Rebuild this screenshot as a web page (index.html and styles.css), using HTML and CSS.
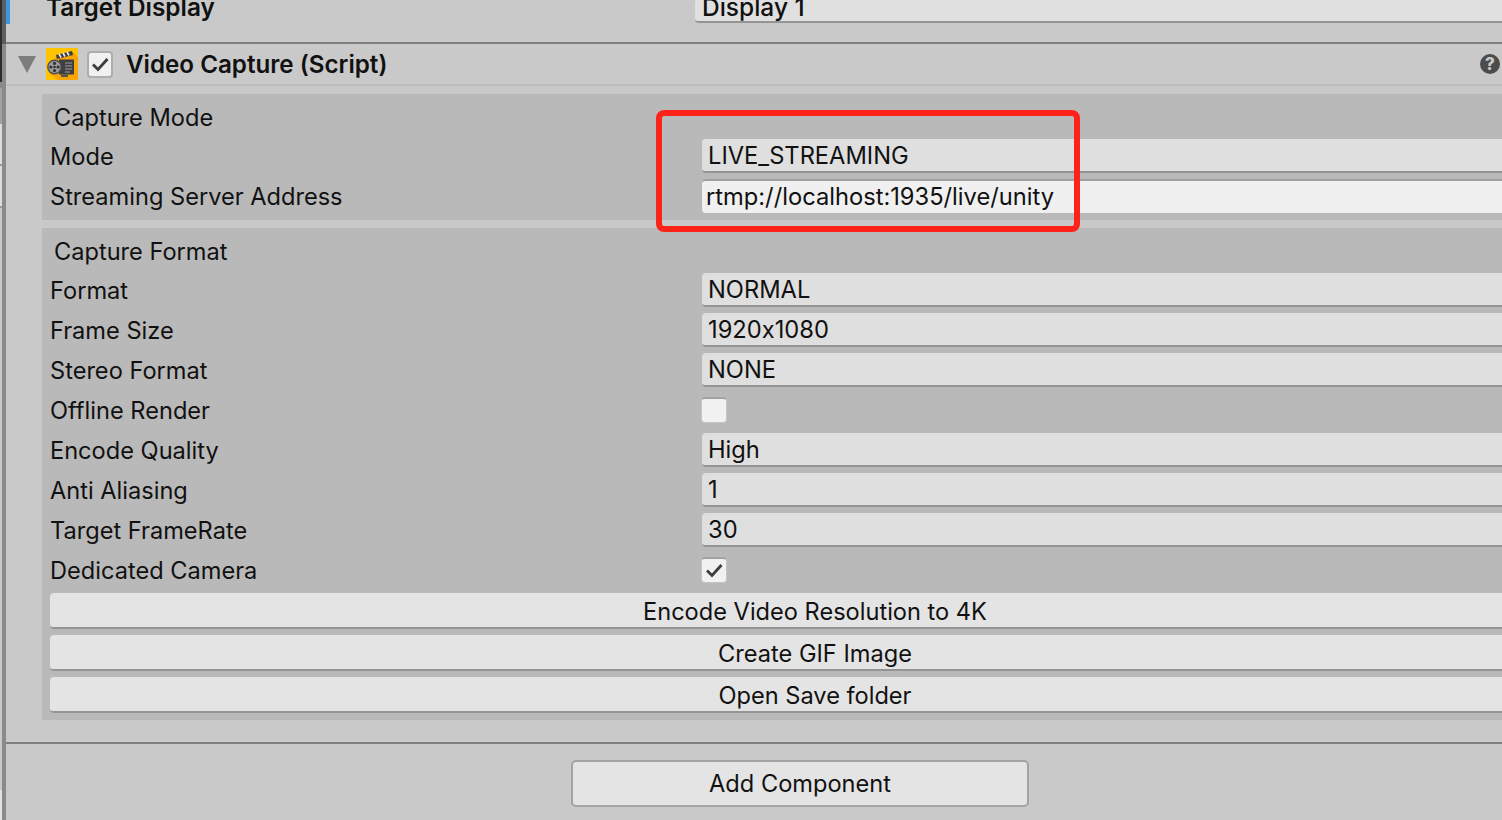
FILE: index.html
```html
<!DOCTYPE html>
<html lang="en">
<head>
<meta charset="utf-8">
<title>Video Capture Inspector</title>
<link rel="stylesheet" href="styles.css">
</head>
<body>
<div class="rail"></div>
<main class="inspector">
  <div class="prev-row">
    <span class="marker"></span>
    <span class="prev-label">Target Display</span>
    <span class="prev-field">Display 1</span>
  </div>
  <header class="comp-header">
    <span class="fold"></span>
    <svg class="comp-icon" width="32" height="32" viewBox="0 0 32 32">
      <rect width="32" height="32" fill="#ffc400"/>
      <path d="M10 8 L26 3 L32 9 L32 32 L12 32 L4 26 Z" fill="#f7a600"/>
      <path d="M10 7 L26 3 L27 7 L11 11 Z" fill="#3c3c3c"/>
      <path d="M13 6 L15 9.500 M17 5 L19 8.500 M21 4 L23 7.500" stroke="#eee" stroke-width="1.600"/>
      <rect x="13" y="11.500" width="15" height="15" fill="#3f3f3f"/>
      <path d="M19 15h7M19 18h7M19 21h7M19 24h5" stroke="#a0a0a0" stroke-width="1"/>
      <rect x="15" y="26.500" width="7" height="2.500" fill="#555"/>
      <circle cx="8.500" cy="19" r="7.400" fill="#505050"/>
      <circle cx="8.500" cy="19" r="6" fill="#9c9c9c"/>
      <circle cx="8.500" cy="19" r="1.300" fill="#333"/>
      <circle cx="8.500" cy="15.400" r="1.600" fill="#333"/>
      <circle cx="8.500" cy="22.600" r="1.600" fill="#333"/>
      <circle cx="4.900" cy="19" r="1.600" fill="#333"/>
      <circle cx="12.100" cy="19" r="1.600" fill="#333"/>
    </svg>
    <span class="check check-header">
      <svg width="18" height="15" viewBox="0 0 18 15"><path class="tick" d="M2 7.500 L7 12.500 L16.500 2"/></svg>
    </span>
    <span class="comp-title">Video Capture (Script)</span>
    <span class="help">?</span>
  </header>
  <div class="body">
    <section class="group group-mode">
      <div class="group-title">Capture Mode</div>
      <div class="row"><span class="label">Mode</span><span class="field">LIVE_STREAMING</span></div>
      <div class="row"><span class="label">Streaming Server Address</span><span class="field input">rtmp://localhost:1935/live/unity</span></div>
    </section>
    <section class="group group-format">
      <div class="group-title">Capture Format</div>
      <div class="row"><span class="label">Format</span><span class="field">NORMAL</span></div>
      <div class="row"><span class="label">Frame Size</span><span class="field">1920x1080</span></div>
      <div class="row"><span class="label">Stereo Format</span><span class="field">NONE</span></div>
      <div class="row"><span class="label">Offline Render</span><span class="check check-row"></span></div>
      <div class="row"><span class="label">Encode Quality</span><span class="field">High</span></div>
      <div class="row"><span class="label">Anti Aliasing</span><span class="field">1</span></div>
      <div class="row"><span class="label">Target FrameRate</span><span class="field">30</span></div>
      <div class="row"><span class="label">Dedicated Camera</span><span class="check check-row"><svg width="18" height="15" viewBox="0 0 18 15"><path class="tick" d="M2 7.500 L7 12.500 L16.500 2"/></svg></span></div>
      <button class="wide-btn">Encode Video Resolution to 4K</button>
      <button class="wide-btn">Create GIF Image</button>
      <button class="wide-btn">Open Save folder</button>
    </section>
  </div>
  <footer class="footer"><button class="add-btn">Add Component</button></footer>
</main>
<div class="annotation"></div>
</body>
</html>
```
FILE: styles.css
```css
* { box-sizing: border-box; }
html, body { margin: 0; height: 100%; overflow: hidden; }
body {
  width: 1502px; height: 820px; display: flex; background: #c9c9c9; position: relative;
  font-family: Inter, "Liberation Sans", sans-serif; font-size: 23.600px; color: #111;
  font-feature-settings: "calt" 0;
}
.rail {
  width: 6px; flex: none;
  background:
    linear-gradient(#2c2c2c 0 82px, #8a8a8a 82px 88px, #a2a2a2 88px 124px, #dcdcdc 124px 164px, #999 164px 166px, #dcdcdc 166px 206px, #999 206px 208px, #c9c9c9 208px 790px, #e2e2e2 790px) left top / 2px 100% no-repeat,
    linear-gradient(#5e5e5e 0 44px, #8a8a8a 44px) right top / 4px 100% no-repeat;
}
.inspector { flex: 1; min-width: 0; display: flex; flex-direction: column; overflow: hidden; }
.prev-row { height: 44px; display: flex; align-items: flex-start; flex: none; border-bottom: 2px solid #808080; }
.marker { width: 4px; height: 24px; background: #3a96dd; flex: none; }
.prev-label { margin-left: 36px; margin-top: -5px; width: 649px; flex: none; font-weight: 600; line-height: 24px; font-size: 24.400px; }
.prev-field { flex: 1; height: 24px; background: #e0e0e0; border-radius: 4px 0 0 4px; border-bottom: 2px solid #949494; padding-left: 7px; font-size: 24.500px; font-weight: 500; line-height: 16px; margin-top: -1px; }
.comp-header { height: 42px; flex: none; display: flex; align-items: center; border-bottom: 2px solid #bcbcbc; position: relative; }
.fold { width: 0; height: 0; margin-left: 12px; border-left: 9px solid transparent; border-right: 9px solid transparent; border-top: 17px solid #7d7d7d; flex: none; }
.comp-icon { margin-left: 10px; flex: none; }
.check { width: 26px; height: 26px; background: #f1f1f1; border-radius: 4px; border: 1px solid #c4c4c4; border-top: 2px solid #a2a2a2; display: flex; align-items: center; justify-content: center; flex: none; }
.check-header { margin-left: 9px; height: 27px; border: 2px solid #adadad; }
.check-row { margin-left: -1px; }
.tick { fill: none; stroke: #3d3d3d; stroke-width: 2.800; }
.comp-title { margin-left: 13px; font-weight: 600; font-size: 24.200px; line-height: 30px; padding-top: 1px; }
.help { position: absolute; right: 2px; top: 10px; width: 20px; height: 20px; border-radius: 50%; background: #4c4c4c; color: #c8c8c8; font-size: 17px; font-weight: 800; line-height: 20px; text-align: center; }
.body { padding-top: 8px; padding-left: 36px; flex: none; height: 658px; display: flex; flex-direction: column; gap: 8px; border-bottom: 2px solid #808080; }
.group { background: #b9b9b9; padding-left: 8px; display: flex; flex-direction: column; }
.group-mode { height: 126px; }
.group-format { height: 492px; }
.group-title { height: 42px; flex: none; padding-left: 4px; line-height: 47px; }
.row { height: 40px; flex: none; display: flex; align-items: center; }
.label { width: 652px; flex: none; line-height: 30px; padding-top: 1px; }
.field { flex: 1; height: 34px; background: #dfdfdf; border-radius: 4px 0 0 4px; border-bottom: 2px solid #949494; padding-left: 6px; font-size: 23.700px; line-height: 34px; white-space: nowrap; }
.field.input { background: #f0f0f0; border-bottom: 0; border-top: 2px solid #a0a0a0; padding-left: 4px; line-height: 32px; }
.wide-btn { display: block; flex: none; width: 1530px; height: 36px; margin-top: 6px; padding: 2px 0 0; background: #e4e4e4; color: #111; border: 0; border-bottom: 2px solid #949494; border-radius: 4px 0 0 4px; font: inherit; font-feature-settings: "calt" 0; }
.wide-btn:first-of-type { margin-top: 3px; }
.footer { flex: 1; display: flex; align-items: flex-start; padding: 16px 0 0 565px; }
.add-btn { width: 458px; height: 47px; background: #e4e4e4; color: #111; border: 2px solid #a4a4a4; border-radius: 5px; font: inherit; font-feature-settings: "calt" 0; padding: 0; }
.annotation { position: absolute; left: 656px; top: 110px; width: 424px; height: 122px; border: 6px solid #fe2318; border-radius: 8px; }
```
